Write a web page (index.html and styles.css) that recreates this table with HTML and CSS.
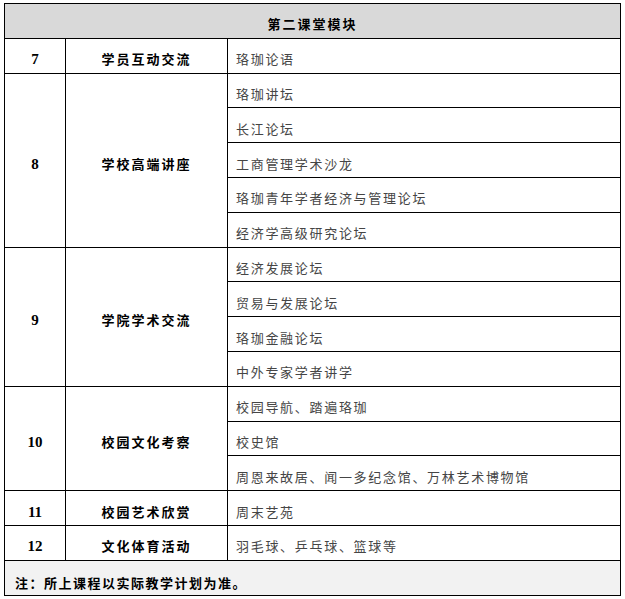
FILE: index.html
```html
<!DOCTYPE html>
<html>
<head>
<meta charset="utf-8">
<link rel="stylesheet" href="styles.css">
</head>
<body>
<table class="tbl">
  <colgroup>
    <col class="c1"><col class="c2"><col class="c3">
  </colgroup>
  <tr class="head"><td colspan="3">第二课堂模块</td></tr>
  <tr><td class="num">7</td><td class="name">学员互动交流</td><td class="item">珞珈论语</td></tr>
  <tr><td class="num" rowspan="5">8</td><td class="name" rowspan="5">学校高端讲座</td><td class="item">珞珈讲坛</td></tr>
  <tr><td class="item">长江论坛</td></tr>
  <tr><td class="item">工商管理学术沙龙</td></tr>
  <tr><td class="item">珞珈青年学者经济与管理论坛</td></tr>
  <tr><td class="item">经济学高级研究论坛</td></tr>
  <tr><td class="num" rowspan="4">9</td><td class="name" rowspan="4">学院学术交流</td><td class="item">经济发展论坛</td></tr>
  <tr><td class="item">贸易与发展论坛</td></tr>
  <tr><td class="item">珞珈金融论坛</td></tr>
  <tr><td class="item">中外专家学者讲学</td></tr>
  <tr><td class="num" rowspan="3">10</td><td class="name" rowspan="3">校园文化考察</td><td class="item">校园导航、踏遍珞珈</td></tr>
  <tr><td class="item">校史馆</td></tr>
  <tr><td class="item">周恩来故居、闻一多纪念馆、万林艺术博物馆</td></tr>
  <tr><td class="num">11</td><td class="name">校园艺术欣赏</td><td class="item">周末艺苑</td></tr>
  <tr><td class="num">12</td><td class="name">文化体育活动</td><td class="item">羽毛球、乒乓球、篮球等</td></tr>
  <tr class="note"><td colspan="3">注：所上课程以实际教学计划为准。</td></tr>
</table>
</body>
</html>
```
FILE: styles.css
```css
html, body {
  margin: 0;
  padding: 0;
  background: #ffffff;
}
body {
  padding: 3px 0 0 4px;
  font-family: "Noto Sans CJK SC", sans-serif;
}
.tbl {
  border-collapse: collapse;
  table-layout: fixed;
  width: 616px;
}
.c1 { width: 61px; }
.c2 { width: 162px; }
.c3 { width: 393px; }
.tbl td {
  border: 1px solid #000000;
  height: 34.8px;
  padding: 7px 0 0 0;
  box-sizing: border-box;
  vertical-align: middle;
  line-height: 18px;
  font-size: 13px;
}
.head td {
  background: #d9d9d9;
  text-align: center;
  font-weight: bold;
  letter-spacing: 2px;
  color: #000000;
}
.tbl td.num {
  text-align: center;
  font-family: "Liberation Serif", serif;
  font-weight: bold;
  font-size: 15px;
  color: #000000;
}
.name {
  text-align: center;
  font-weight: bold;
  letter-spacing: 2px;
  color: #000000;
}
.tbl td.item {
  padding-left: 8px;
  letter-spacing: 1.7px;
  color: #454545;
}
.note td {
  background: #f2f2f2;
  padding-left: 10px;
  padding-top: 10px;
  font-weight: bold;
  letter-spacing: 1.5px;
  color: #000000;
}
```
